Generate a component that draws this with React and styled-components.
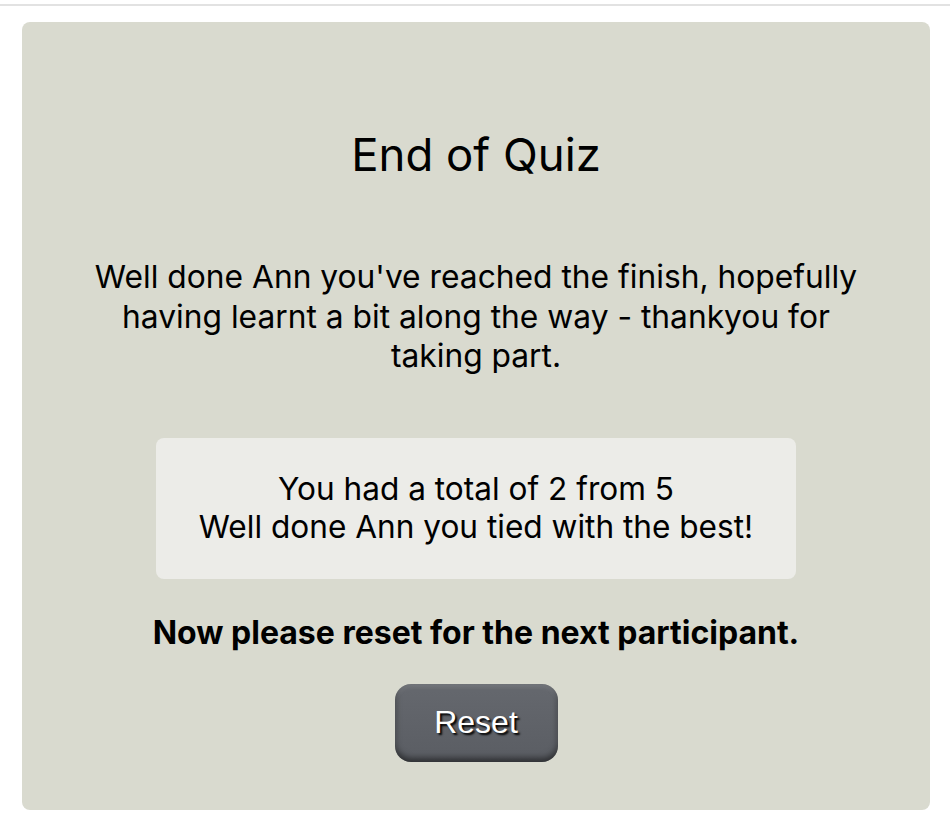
import React from "react";
import styled, { createGlobalStyle } from "styled-components";

const Global = createGlobalStyle`
  html, body { margin: 0; padding: 0; background: #ffffff; }
  body { font-family: Inter, "Noto Sans", sans-serif; color: #000; }
`;

const TopRule = styled.div`
  height: 2px;
  margin-top: 4px;
  background: #e2e2e2;
`;

const Page = styled.div`
  padding: 16px 20px 22px 22px;
`;

const Card = styled.section`
  background: #d9dacf;
  border-radius: 8px;
  padding: 104.5px 60px 48px;
  display: flex;
  flex-direction: column;
  align-items: center;
  text-align: center;
`;

const Title = styled.h1`
  margin: 0;
  font-size: 45.5px;
  font-weight: 400;
  line-height: 56px;
`;

const Lead = styled.p`
  margin: 74.5px 0 0;
  font-size: 31.75px;
  line-height: 39.5px;
`;

const ScoreBox = styled.div`
  margin-top: 62.5px;
  width: 640px;
  box-sizing: border-box;
  padding: 32px 20px 32.5px;
  background: #ecece8;
  border-radius: 8px;
  font-size: 31.6px;
  line-height: 38px;
`;

const Prompt = styled.p`
  margin: 34px 0 0;
  font-size: 32px;
  font-weight: 700;
  line-height: 39px;
`;

const ResetButton = styled.button`
  margin-top: 32px;
  width: 163px;
  height: 78px;
  border: none;
  border-radius: 16px;
  background: linear-gradient(#65686e, #5a5d63);
  box-shadow: inset 0 -4px 6px rgba(0, 0, 0, 0.5), inset 0 3px 4px rgba(255, 255, 255, 0.12);
  color: #ffffff;
  font-family: "Liberation Sans", Arial, sans-serif;
  font-size: 32px;
  text-shadow: 2px 2px 2px #000;
  cursor: pointer;
`;

export default function App() {
  return (
    <>
      <Global />
      <TopRule />
      <Page>
        <Card>
          <Title>End of Quiz</Title>
          <Lead>
            Well done Ann you've reached the finish, hopefully having learnt a bit along the way - thankyou for taking part.
          </Lead>
          <ScoreBox>
            You had a total of 2 from 5
            <br />
            Well done Ann you tied with the best!
          </ScoreBox>
          <Prompt>Now please reset for the next participant.</Prompt>
          <ResetButton>Reset</ResetButton>
        </Card>
      </Page>
    </>
  );
}
